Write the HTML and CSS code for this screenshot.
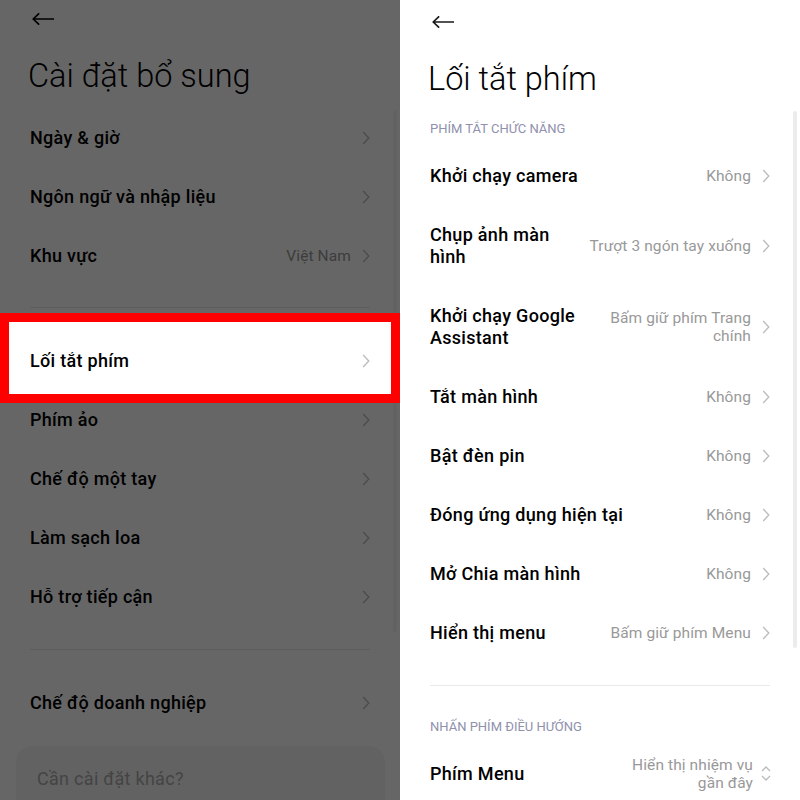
FILE: index.html
```html
<!DOCTYPE html>
<html lang="vi">
<head>
<meta charset="utf-8">
<title>Lối tắt phím</title>
<link rel="stylesheet" href="styles.css">
</head>
<body>
<div class="panel panel-left">
  <div class="topbar">
    <svg class="back" viewBox="0 0 22 12" width="22" height="12"><path d="M1.2 6H21.5M6.6 0.8L1.2 6L6.6 11.2" fill="none" stroke="#000" stroke-width="1.7" stroke-linecap="round" stroke-linejoin="round"/></svg>
  </div>
  <h1 class="title">Cài đặt bổ sung</h1>
  <div class="content first-list">
    <div class="row"><span class="row-title">Ngày &amp; giờ</span><svg class="chev" viewBox="0 0 8 14" width="8" height="14"><polyline points="1.2,1 6.8,7 1.2,13" fill="none" stroke="#bbb" stroke-width="1.3"/></svg></div>
    <div class="row"><span class="row-title">Ngôn ngữ và nhập liệu</span><svg class="chev" viewBox="0 0 8 14" width="8" height="14"><polyline points="1.2,1 6.8,7 1.2,13" fill="none" stroke="#bbb" stroke-width="1.3"/></svg></div>
    <div class="row"><span class="row-title">Khu vực</span><span class="row-value">Việt Nam</span><svg class="chev" viewBox="0 0 8 14" width="8" height="14"><polyline points="1.2,1 6.8,7 1.2,13" fill="none" stroke="#bbb" stroke-width="1.3"/></svg></div>
    <div class="divider divider-a"></div>
    <div class="row row--highlight"><span class="row-title">Lối tắt phím</span><svg class="chev" viewBox="0 0 8 14" width="8" height="14"><polyline points="1.2,1 6.8,7 1.2,13" fill="none" stroke="#bbb" stroke-width="1.3"/></svg></div>
    <div class="row"><span class="row-title">Phím ảo</span><svg class="chev" viewBox="0 0 8 14" width="8" height="14"><polyline points="1.2,1 6.8,7 1.2,13" fill="none" stroke="#bbb" stroke-width="1.3"/></svg></div>
    <div class="row"><span class="row-title">Chế độ một tay</span><svg class="chev" viewBox="0 0 8 14" width="8" height="14"><polyline points="1.2,1 6.8,7 1.2,13" fill="none" stroke="#bbb" stroke-width="1.3"/></svg></div>
    <div class="row"><span class="row-title">Làm sạch loa</span><svg class="chev" viewBox="0 0 8 14" width="8" height="14"><polyline points="1.2,1 6.8,7 1.2,13" fill="none" stroke="#bbb" stroke-width="1.3"/></svg></div>
    <div class="row"><span class="row-title">Hỗ trợ tiếp cận</span><svg class="chev" viewBox="0 0 8 14" width="8" height="14"><polyline points="1.2,1 6.8,7 1.2,13" fill="none" stroke="#bbb" stroke-width="1.3"/></svg></div>
    <div class="divider divider-b"></div>
    <div class="row"><span class="row-title">Chế độ doanh nghiệp</span><svg class="chev" viewBox="0 0 8 14" width="8" height="14"><polyline points="1.2,1 6.8,7 1.2,13" fill="none" stroke="#bbb" stroke-width="1.3"/></svg></div>
  </div>
  <div class="card">Cần cài đặt khác?</div>
  <div class="scrollbar scrollbar-left"></div>
  <div class="dim"></div>
</div>

<div class="panel panel-right">
  <div class="topbar topbar-right">
    <svg class="back" viewBox="0 0 22 12" width="22" height="12"><path d="M1.2 6H21.5M6.6 0.8L1.2 6L6.6 11.2" fill="none" stroke="#1a1a1a" stroke-width="1.7" stroke-linecap="round" stroke-linejoin="round"/></svg>
  </div>
  <h1 class="title title-right">Lối tắt phím</h1>
  <div class="section-header sh-first">Phím tắt chức năng</div>
  <div class="content">
    <div class="row"><span class="row-title">Khởi chạy camera</span><span class="row-value">Không</span><svg class="chev" viewBox="0 0 8 14" width="8" height="14"><polyline points="1.2,1 6.8,7 1.2,13" fill="none" stroke="#bbb" stroke-width="1.3"/></svg></div>
    <div class="row"><span class="row-title">Chụp ảnh màn hình</span><span class="row-value">Trượt 3 ngón tay xuống</span><svg class="chev" viewBox="0 0 8 14" width="8" height="14"><polyline points="1.2,1 6.8,7 1.2,13" fill="none" stroke="#bbb" stroke-width="1.3"/></svg></div>
    <div class="row"><span class="row-title">Khởi chạy Google Assistant</span><span class="row-value">Bấm giữ phím Trang chính</span><svg class="chev" viewBox="0 0 8 14" width="8" height="14"><polyline points="1.2,1 6.8,7 1.2,13" fill="none" stroke="#bbb" stroke-width="1.3"/></svg></div>
    <div class="row"><span class="row-title">Tắt màn hình</span><span class="row-value">Không</span><svg class="chev" viewBox="0 0 8 14" width="8" height="14"><polyline points="1.2,1 6.8,7 1.2,13" fill="none" stroke="#bbb" stroke-width="1.3"/></svg></div>
    <div class="row"><span class="row-title">Bật đèn pin</span><span class="row-value">Không</span><svg class="chev" viewBox="0 0 8 14" width="8" height="14"><polyline points="1.2,1 6.8,7 1.2,13" fill="none" stroke="#bbb" stroke-width="1.3"/></svg></div>
    <div class="row"><span class="row-title">Đóng ứng dụng hiện tại</span><span class="row-value">Không</span><svg class="chev" viewBox="0 0 8 14" width="8" height="14"><polyline points="1.2,1 6.8,7 1.2,13" fill="none" stroke="#bbb" stroke-width="1.3"/></svg></div>
    <div class="row"><span class="row-title">Mở Chia màn hình</span><span class="row-value">Không</span><svg class="chev" viewBox="0 0 8 14" width="8" height="14"><polyline points="1.2,1 6.8,7 1.2,13" fill="none" stroke="#bbb" stroke-width="1.3"/></svg></div>
    <div class="row"><span class="row-title">Hiển thị menu</span><span class="row-value">Bấm giữ phím Menu</span><svg class="chev" viewBox="0 0 8 14" width="8" height="14"><polyline points="1.2,1 6.8,7 1.2,13" fill="none" stroke="#bbb" stroke-width="1.3"/></svg></div>
    <div class="divider divider-c"></div>
  </div>
  <div class="section-header sh-second">Nhấn phím điều hướng</div>
  <div class="content">
    <div class="row"><span class="row-title">Phím Menu</span><span class="row-value row-value--narrow">Hiển thị nhiệm vụ gần đây</span><svg class="spin" viewBox="0 0 10 18" width="10" height="18"><polyline points="1,6 5,2 9,6" fill="none" stroke="#bbb" stroke-width="1.3"/><polyline points="1,11 5,15 9,11" fill="none" stroke="#bbb" stroke-width="1.3"/></svg></div>
  </div>
  <div class="scrollbar scrollbar-right"></div>
</div>
</body>
</html>
```

FILE: styles.css
```css
* { box-sizing: border-box; }

html, body {
  margin: 0;
  padding: 0;
}

body {
  width: 800px;
  height: 800px;
  overflow: hidden;
  display: flex;
  font-family: Roboto, "Noto Sans", "Liberation Sans", sans-serif;
  color: #000;
  background: #fff;
}

.panel {
  position: relative;
  flex: none;
  width: 400px;
  height: 800px;
  overflow: hidden;
  background: #fff;
}

.topbar {
  height: 38px;
  padding-left: 32px;
  display: flex;
  align-items: center;
}

.topbar-right {
  height: 44px;
}

.back {
  display: block;
  width: 22px;
  height: 12px;
}

.title {
  margin: 18px 0 12.5px;
  padding: 0 28px;
  font-size: 32.5px;
  line-height: 40px;
  font-weight: 300;
  color: #000;
}

.title-right {
  margin: 15.4px 0 20.6px;
}

.content {
  padding: 0 30px;
}

.row {
  display: flex;
  align-items: center;
  min-height: 59px;
  padding: 18.5px 0;
}

.row-title {
  flex: 1 1 auto;
  min-width: 0;
  font-size: 18px;
  line-height: 22px;
  font-weight: 500;
  letter-spacing: 0.3px;
  color: #000;
}

.row-value {
  flex: 0 0 auto;
  max-width: 163px;
  margin-left: 4px;
  margin-right: 11px;
  font-size: 15.5px;
  line-height: 18px;
  letter-spacing: 0.1px;
  color: #999;
  text-align: right;
}

.row-value--narrow {
  max-width: 132px;
  margin-right: 8px;
}

.chev {
  flex: none;
  display: block;
  width: 8px;
  height: 14px;
}

.spin {
  flex: none;
  display: block;
  width: 10px;
  height: 18px;
  margin-right: -1px;
}

.divider {
  height: 1px;
  background: #e9e9e9;
}

.divider-a {
  margin: 21.5px 0 23px;
}

.divider-b {
  margin: 22.5px 0 23.5px;
}

.divider-c {
  margin: 22.5px 0 31.7px;
}

.section-header {
  padding: 0 30px;
  font-size: 13px;
  line-height: 18px;
  color: #8f91ad;
  text-transform: uppercase;
}

.sh-first {
  margin-bottom: 8.5px;
}

.sh-second {
  margin-bottom: 2px;
}

.row--highlight {
  position: relative;
  z-index: 3;
}

.row--highlight::before {
  content: "";
  position: absolute;
  left: -30px;
  right: -30px;
  top: -18px;
  bottom: -13px;
  background: #fff;
  border: 9px solid #ff0000;
  z-index: -1;
}

.card {
  margin: 14px 15px 0 16px;
  padding: 22px 21px 40px;
  background: #f6f6f6;
  border-radius: 16px;
  font-size: 18px;
  line-height: 22px;
  letter-spacing: 0.3px;
  color: #aaa;
}

.scrollbar {
  position: absolute;
  right: 3px;
  top: 111px;
  width: 4px;
  height: 537px;
  border-radius: 2px;
  background: #ececec;
}

.scrollbar-left {
  top: 110px;
  height: 523px;
  background: #f6f6f6;
}

.dim {
  position: absolute;
  inset: 0;
  background: rgba(0, 0, 0, 0.6);
  z-index: 2;
}
```
